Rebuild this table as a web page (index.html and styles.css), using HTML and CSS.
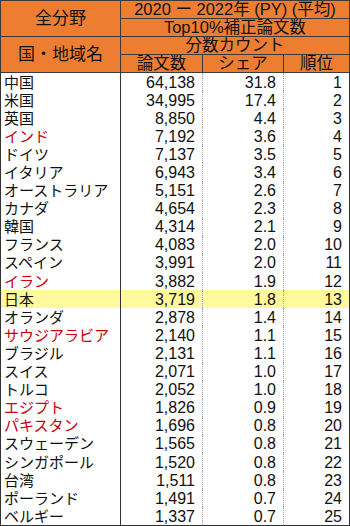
FILE: index.html
```html
<!DOCTYPE html>
<html lang="ja">
<head>
<meta charset="utf-8">
<link rel="stylesheet" href="styles.css">
</head>
<body>
<table class="tbl">
  <colgroup>
    <col class="c-name"><col class="c-num"><col class="c-share"><col class="c-rank">
  </colgroup>
  <thead>
    <tr class="h">
      <th rowspan="2" class="hl">全分野</th>
      <th colspan="3">2020 ー 2022年 (PY) (平均)</th>
    </tr>
    <tr class="h">
      <th colspan="3">Top10%補正論文数</th>
    </tr>
    <tr class="h">
      <th rowspan="2" class="hl">国・地域名</th>
      <th colspan="3">分数カウント</th>
    </tr>
    <tr class="h">
      <th>論文数</th><th>シェア</th><th>順位</th>
    </tr>
  </thead>
  <tbody>
    <tr><td>中国</td><td>64,138</td><td>31.8</td><td>1</td></tr>
    <tr><td>米国</td><td>34,995</td><td>17.4</td><td>2</td></tr>
    <tr><td>英国</td><td>8,850</td><td>4.4</td><td>3</td></tr>
    <tr class="red"><td>インド</td><td>7,192</td><td>3.6</td><td>4</td></tr>
    <tr><td>ドイツ</td><td>7,137</td><td>3.5</td><td>5</td></tr>
    <tr><td>イタリア</td><td>6,943</td><td>3.4</td><td>6</td></tr>
    <tr><td>オーストラリア</td><td>5,151</td><td>2.6</td><td>7</td></tr>
    <tr><td>カナダ</td><td>4,654</td><td>2.3</td><td>8</td></tr>
    <tr><td>韓国</td><td>4,314</td><td>2.1</td><td>9</td></tr>
    <tr><td>フランス</td><td>4,083</td><td>2.0</td><td>10</td></tr>
    <tr><td>スペイン</td><td>3,991</td><td>2.0</td><td>11</td></tr>
    <tr class="red"><td>イラン</td><td>3,882</td><td>1.9</td><td>12</td></tr>
    <tr class="jp"><td>日本</td><td>3,719</td><td>1.8</td><td>13</td></tr>
    <tr><td>オランダ</td><td>2,878</td><td>1.4</td><td>14</td></tr>
    <tr class="red"><td>サウジアラビア</td><td>2,140</td><td>1.1</td><td>15</td></tr>
    <tr><td>ブラジル</td><td>2,131</td><td>1.1</td><td>16</td></tr>
    <tr><td>スイス</td><td>2,071</td><td>1.0</td><td>17</td></tr>
    <tr><td>トルコ</td><td>2,052</td><td>1.0</td><td>18</td></tr>
    <tr class="red"><td>エジプト</td><td>1,826</td><td>0.9</td><td>19</td></tr>
    <tr class="red"><td>パキスタン</td><td>1,696</td><td>0.8</td><td>20</td></tr>
    <tr><td>スウェーデン</td><td>1,565</td><td>0.8</td><td>21</td></tr>
    <tr><td>シンガポール</td><td>1,520</td><td>0.8</td><td>22</td></tr>
    <tr><td>台湾</td><td>1,511</td><td>0.8</td><td>23</td></tr>
    <tr><td>ポーランド</td><td>1,491</td><td>0.7</td><td>24</td></tr>
    <tr><td>ベルギー</td><td>1,337</td><td>0.7</td><td>25</td></tr>
  </tbody>
</table>
</body>
</html>
```
FILE: styles.css
```css
html, body {
  margin: 0;
  padding: 0;
  background: #ffffff;
}
.tbl {
  border-collapse: collapse;
  table-layout: fixed;
  width: 349px;
  font-family: "Liberation Sans", "Noto Sans CJK JP", sans-serif;
  font-size: 16px;
  color: #111111;
  border: 1px solid #333333;
}
.c-name { width: 120px; }
.c-num { width: 82px; }
.c-share { width: 81px; }
.c-rank { width: 66px; }
.h th {
  background: #ED7D31;
  font-weight: normal;
  font-size: 16.5px;
  height: 17px;
  padding: 0;
  line-height: 17px;
  border: 1px solid #3a3a3a;
  text-align: center;
  white-space: nowrap;
  overflow: hidden;
}
.h th.hl {
  font-size: 17px;
}
tbody td {
  height: 18.1px;
  padding: 0 7px 0 0;
  line-height: 17px;
  text-align: right;
  border-left: 1px dotted #a0a0a0;
  white-space: nowrap;
  overflow: hidden;
}
tbody td:first-child {
  text-align: left;
  font-size: 15px;
  padding: 0 0 0 3px;
  border-right: 1px solid #333333;
  border-left: 1px solid #333333;
}
tbody td:last-child {
  padding-right: 7px;
}
tbody tr.red td:first-child {
  color: #C8000A;
}
tbody tr.jp td {
  background: #FFF99E;
}
tbody tr:last-child td {
  border-bottom: 1px solid #333333;
}
```
